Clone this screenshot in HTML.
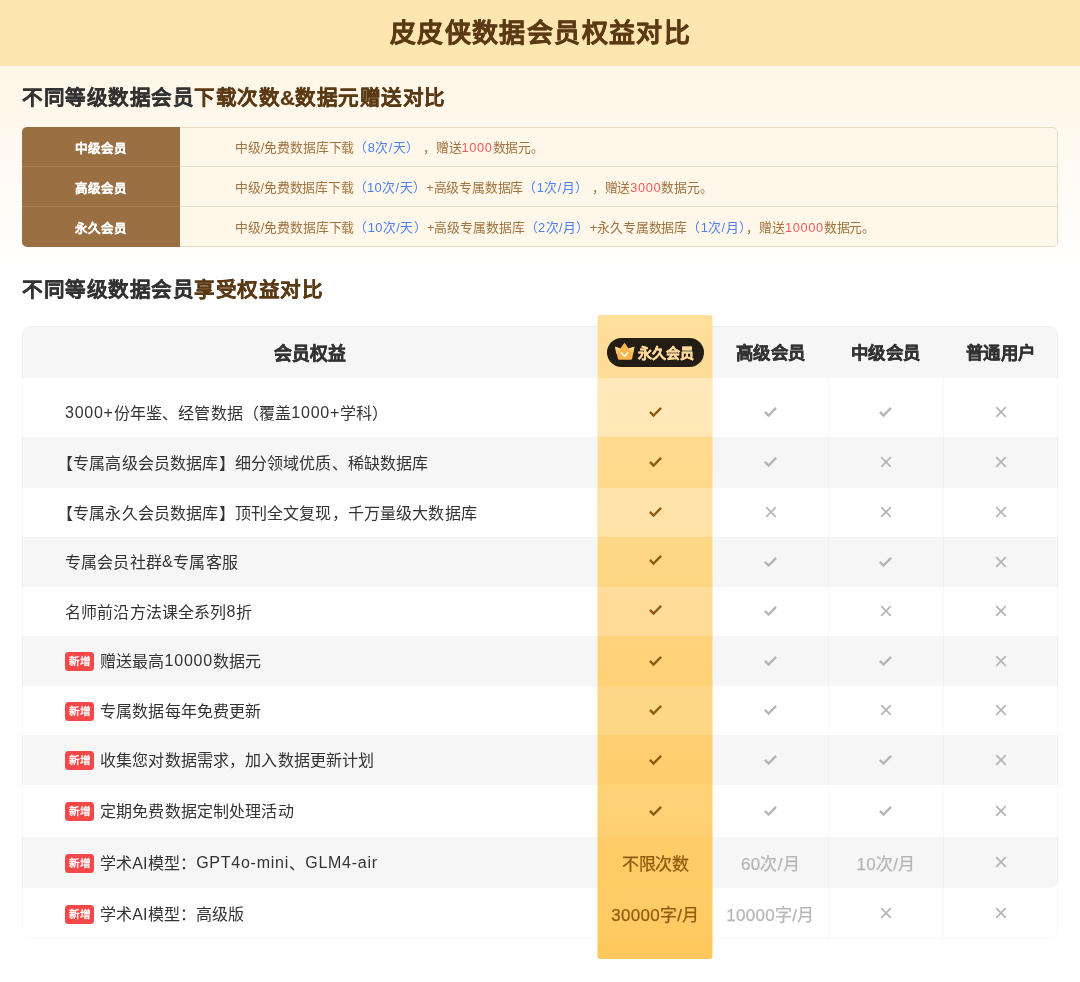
<!DOCTYPE html>
<html lang="zh-CN">
<head>
<meta charset="utf-8">
<title>皮皮侠数据会员权益对比</title>
<style>
*{box-sizing:border-box;margin:0;padding:0}
html,body{width:1080px;height:982px;overflow:hidden;background:#fff}
body{font-family:"Liberation Sans",sans-serif;color:#333;position:relative;will-change:transform;
  background:linear-gradient(180deg,#fff6e6 0px,#fff6e6 66px,#ffffff 272px,#ffffff 100%)}
.banner{height:66px;background:#fee6b1;text-align:center;line-height:65px;font-size:26px;font-weight:700;color:#5b3a16;letter-spacing:1.4px;padding-left:1px;padding-top:1px;-webkit-text-stroke:.35px #5b3a16}
h2{position:absolute;left:22px;font-size:20.6px;letter-spacing:.5px;-webkit-text-stroke:.25px currentColor;font-weight:700;line-height:28px;color:#333;white-space:nowrap}
h2 b{color:#5b3a16;font-weight:700}
.h2a{top:84px}
.h2b{top:276px}
/* table 1 */
.t1{position:absolute;left:22px;top:127px;width:1036px;height:120px;border-radius:5px;overflow:hidden;background:#fff7ea}
.t1:after{content:"";position:absolute;left:158px;top:0;right:0;bottom:0;border:1px solid #eadbc6;border-left:none;border-radius:0 5px 5px 0}
.t1 .r{display:flex;height:40px}
.t1 .k{width:158px;background:#9a7043;color:#fff;font-size:12.5px;font-weight:700;-webkit-text-stroke:.2px #fff;text-align:center;line-height:40px;padding-top:2px;box-shadow:inset 0 -1px 0 #a98155}
.t1 .r:last-child .k{box-shadow:none}
.t1 .v{flex:1;padding-left:55px;font-size:12.85px;color:#a3733f;line-height:41px;white-space:nowrap;letter-spacing:-.12px;box-shadow:inset 0 -1px 0 #eadbc6}
.t1 .v i{font-style:normal;color:#4d7ff0;letter-spacing:.4px}
.t1 .v em{font-style:normal;color:#f25a5a;letter-spacing:.6px}
.t1 .r:nth-child(2) .v{letter-spacing:-.19px}
/* table 2 */
.t2{position:absolute;left:22px;top:326px;width:1036px;height:613px;border-radius:9px;overflow:hidden;background:#fff}
.t2:after{content:"";position:absolute;left:0;top:0;right:0;bottom:0;border:1px solid rgba(0,0,0,.028);border-radius:9px}
.t2 .r{display:flex;align-items:center;position:relative}
.t2 .r:nth-child(1){height:52px}
.t2 .r:nth-child(2){height:59px}
.t2 .r:nth-child(3){height:51px}
.t2 .r:nth-child(4){height:49px}
.t2 .r:nth-child(5){height:50px}
.t2 .r:nth-child(6){height:49px}
.t2 .r:nth-child(7){height:50px}
.t2 .r:nth-child(8){height:49px}
.t2 .r:nth-child(9){height:50px}
.t2 .r:nth-child(10){height:52px}
.t2 .r:nth-child(11){height:51px}
.t2 .r:nth-child(12){height:51px}
.t2 .r.hd{background:#f6f6f6;font-weight:700}
.t2 .r.g{background:#f6f6f6}
.t2 .r:nth-child(11){border-bottom-right-radius:9px}
.t2 .c0{width:576px;height:100%;padding-left:43px;font-size:16px;letter-spacing:.15px;color:#333;white-space:nowrap;display:flex;align-items:center;padding-bottom:2px}
.t2 .c0 u{text-decoration:none;letter-spacing:.75px;position:relative;top:1px}
.t2 .hd .c0{padding:0;justify-content:center;font-size:17.8px;letter-spacing:0;font-weight:700;-webkit-text-stroke:.5px #333;padding-bottom:1px}
.t2 .c{width:115px;height:100%;text-align:center;color:#b5b5b5;display:flex;align-items:center;justify-content:center}
.t2 .c:nth-child(4),.t2 .c:nth-child(5){border-left:1px solid rgba(0,0,0,.024)}
.t2 .hd .c{color:#333;font-size:17.4px;letter-spacing:.5px;padding-left:.5px;font-weight:700;-webkit-text-stroke:.45px #333;padding-bottom:2px;border-left:none!important}
.t2 .r.first .c{padding-top:10px}
.t2 .r.first .c0{padding-top:10px}
.t2 .c.p{position:relative;z-index:3;color:#8f5a10}
.t2 .c.t{font-size:17px;color:#b6b6b6;letter-spacing:.3px;-webkit-text-stroke:.25px currentColor;padding-bottom:1px}
.t2 .c.p.t{color:#8f5a10}
.t2 .r:nth-child(11) .c.p.t{letter-spacing:-.3px}
svg.ck{width:16px;height:14px;display:block;margin-top:-1px}
.t2 .r:nth-child(5) .c.p svg,.t2 .r:nth-child(6) .c.p svg{margin-top:-4px}
svg.xx{width:12px;height:12px;display:block;margin-top:-1px}
.bk{margin-left:-8px}
.new{display:inline-block;width:29px;height:19px;border-radius:3.5px;background:#f54848;color:#fff;font-size:10.7px;font-weight:700;line-height:19px;text-align:center;margin-right:6px;letter-spacing:0;position:relative;top:1.5px}
/* highlighted column */
.hl{position:absolute;z-index:2;left:598px;transform:translateX(-.5px);top:315px;width:115px;height:644px;border-radius:3px;background:linear-gradient(180deg,#ffdf9c 0%,#ffc85c 100%)}
.hl i{position:absolute;left:0;width:115px;background:#fff;display:block}
.badge{position:absolute;z-index:4;left:607px;top:337.5px;width:97px;height:29px;border-radius:15px;background:#241d16;color:#fedb9a;font-size:14px;font-weight:700;-webkit-text-stroke:.4px #fedb9a;line-height:30px;padding-left:31px;white-space:nowrap}
.badge svg{position:absolute;left:-1px;top:-1.5px;width:40px;height:32px}
</style>
</head>
<body>
<div class="banner">皮皮侠数据会员权益对比</div>
<h2 class="h2a">不同等级数据会员<b>下载次数&amp;数据元赠送对比</b></h2>
<div class="t1">
  <div class="r"><div class="k">中级会员</div><div class="v">中级/免费数据库下载<i>（8次/天）</i> ，赠送<em>1000</em>数据元。</div></div>
  <div class="r"><div class="k">高级会员</div><div class="v">中级/免费数据库下载<i>（10次/天）</i>+高级专属数据库<i>（1次/月）</i> ，赠送<em>3000</em>数据元。</div></div>
  <div class="r"><div class="k">永久会员</div><div class="v">中级/免费数据库下载<i>（10次/天）</i>+高级专属数据库<i>（2次/月）</i>+永久专属数据库<i>（1次/月）</i>，赠送<em>10000</em>数据元。</div></div>
</div>
<h2 class="h2b">不同等级数据会员<b>享受权益对比</b></h2>
<div class="hl"><i style="top:63px;height:59px;opacity:0.34"></i><i style="top:173px;height:49px;opacity:0.27"></i><i style="top:272px;height:49px;opacity:0.2"></i><i style="top:371px;height:49px;opacity:0.13"></i><i style="top:470px;height:52px;opacity:0.07"></i><i style="top:573px;height:51px;opacity:0.02"></i></div>
<div class="badge"><svg viewBox="0 0 40 32"><defs><linearGradient id="wg" gradientUnits="userSpaceOnUse" x1="0" y1="10.5" x2="0" y2="17.5"><stop offset="0" stop-color="#ffe99c"/><stop offset="1" stop-color="#fbb64e"/></linearGradient></defs><path d="M9 10.7 L14.4 12.6 L18.5 6.7 L22.6 12.6 L28.4 10.7 L26.2 22.4 Q25.9 23.8 24.6 23.8 L13.5 23.8 Q12.2 23.8 11.9 22.4 Z" fill="#fbb64e"/><path d="M9 10.7 L14.4 12.6 L13 18 L10.4 18 Z M28.4 10.7 L22.6 12.6 L24.4 18 L27 18 Z" fill="url(#wg)"/><path d="M15.3 16.8 L18.5 20.3 L21.7 16.8" fill="none" stroke="#fff" stroke-width="1.5" stroke-linecap="round" stroke-linejoin="round"/></svg>永久会员</div>
<div class="t2">
  <div class="r hd"><div class="c0">会员权益</div><div class="c"></div><div class="c">高级会员</div><div class="c">中级会员</div><div class="c">普通用户</div></div>
  <div class="r first"><div class="c0"><u>3000+</u>份年鉴、经管数据（覆盖<u>1000+</u>学科）</div><div class="c p"><svg class="ck" viewBox="0 0 16 14"><path d="M1.9 6.9 L5.5 10.5 L13.1 2.9" fill="none" stroke="currentColor" stroke-width="2.4"/></svg></div><div class="c"><svg class="ck" viewBox="0 0 16 14"><path d="M1.9 6.9 L5.5 10.5 L13.1 2.9" fill="none" stroke="currentColor" stroke-width="2.4"/></svg></div><div class="c"><svg class="ck" viewBox="0 0 16 14"><path d="M1.9 6.9 L5.5 10.5 L13.1 2.9" fill="none" stroke="currentColor" stroke-width="2.4"/></svg></div><div class="c"><svg class="xx" viewBox="0 0 12 12"><path d="M1.2 1.2 L10.8 10.8 M10.8 1.2 L1.2 10.8" fill="none" stroke="currentColor" stroke-width="1.7"/></svg></div></div>
  <div class="r g"><div class="c0"><span class="bk">【</span>专属高级会员数据库】细分领域优质、稀缺数据库</div><div class="c p"><svg class="ck" viewBox="0 0 16 14"><path d="M1.9 6.9 L5.5 10.5 L13.1 2.9" fill="none" stroke="currentColor" stroke-width="2.4"/></svg></div><div class="c"><svg class="ck" viewBox="0 0 16 14"><path d="M1.9 6.9 L5.5 10.5 L13.1 2.9" fill="none" stroke="currentColor" stroke-width="2.4"/></svg></div><div class="c"><svg class="xx" viewBox="0 0 12 12"><path d="M1.2 1.2 L10.8 10.8 M10.8 1.2 L1.2 10.8" fill="none" stroke="currentColor" stroke-width="1.7"/></svg></div><div class="c"><svg class="xx" viewBox="0 0 12 12"><path d="M1.2 1.2 L10.8 10.8 M10.8 1.2 L1.2 10.8" fill="none" stroke="currentColor" stroke-width="1.7"/></svg></div></div>
  <div class="r"><div class="c0"><span class="bk">【</span>专属永久会员数据库】顶刊全文复现，千万量级大数据库</div><div class="c p"><svg class="ck" viewBox="0 0 16 14"><path d="M1.9 6.9 L5.5 10.5 L13.1 2.9" fill="none" stroke="currentColor" stroke-width="2.4"/></svg></div><div class="c"><svg class="xx" viewBox="0 0 12 12"><path d="M1.2 1.2 L10.8 10.8 M10.8 1.2 L1.2 10.8" fill="none" stroke="currentColor" stroke-width="1.7"/></svg></div><div class="c"><svg class="xx" viewBox="0 0 12 12"><path d="M1.2 1.2 L10.8 10.8 M10.8 1.2 L1.2 10.8" fill="none" stroke="currentColor" stroke-width="1.7"/></svg></div><div class="c"><svg class="xx" viewBox="0 0 12 12"><path d="M1.2 1.2 L10.8 10.8 M10.8 1.2 L1.2 10.8" fill="none" stroke="currentColor" stroke-width="1.7"/></svg></div></div>
  <div class="r g"><div class="c0">专属会员社群<u>&amp;</u>专属客服</div><div class="c p"><svg class="ck" viewBox="0 0 16 14"><path d="M1.9 6.9 L5.5 10.5 L13.1 2.9" fill="none" stroke="currentColor" stroke-width="2.4"/></svg></div><div class="c"><svg class="ck" viewBox="0 0 16 14"><path d="M1.9 6.9 L5.5 10.5 L13.1 2.9" fill="none" stroke="currentColor" stroke-width="2.4"/></svg></div><div class="c"><svg class="ck" viewBox="0 0 16 14"><path d="M1.9 6.9 L5.5 10.5 L13.1 2.9" fill="none" stroke="currentColor" stroke-width="2.4"/></svg></div><div class="c"><svg class="xx" viewBox="0 0 12 12"><path d="M1.2 1.2 L10.8 10.8 M10.8 1.2 L1.2 10.8" fill="none" stroke="currentColor" stroke-width="1.7"/></svg></div></div>
  <div class="r"><div class="c0">名师前沿方法课全系列<u>8</u>折</div><div class="c p"><svg class="ck" viewBox="0 0 16 14"><path d="M1.9 6.9 L5.5 10.5 L13.1 2.9" fill="none" stroke="currentColor" stroke-width="2.4"/></svg></div><div class="c"><svg class="ck" viewBox="0 0 16 14"><path d="M1.9 6.9 L5.5 10.5 L13.1 2.9" fill="none" stroke="currentColor" stroke-width="2.4"/></svg></div><div class="c"><svg class="xx" viewBox="0 0 12 12"><path d="M1.2 1.2 L10.8 10.8 M10.8 1.2 L1.2 10.8" fill="none" stroke="currentColor" stroke-width="1.7"/></svg></div><div class="c"><svg class="xx" viewBox="0 0 12 12"><path d="M1.2 1.2 L10.8 10.8 M10.8 1.2 L1.2 10.8" fill="none" stroke="currentColor" stroke-width="1.7"/></svg></div></div>
  <div class="r g"><div class="c0"><span class="new">新增</span>赠送最高<u>10000</u>数据元</div><div class="c p"><svg class="ck" viewBox="0 0 16 14"><path d="M1.9 6.9 L5.5 10.5 L13.1 2.9" fill="none" stroke="currentColor" stroke-width="2.4"/></svg></div><div class="c"><svg class="ck" viewBox="0 0 16 14"><path d="M1.9 6.9 L5.5 10.5 L13.1 2.9" fill="none" stroke="currentColor" stroke-width="2.4"/></svg></div><div class="c"><svg class="ck" viewBox="0 0 16 14"><path d="M1.9 6.9 L5.5 10.5 L13.1 2.9" fill="none" stroke="currentColor" stroke-width="2.4"/></svg></div><div class="c"><svg class="xx" viewBox="0 0 12 12"><path d="M1.2 1.2 L10.8 10.8 M10.8 1.2 L1.2 10.8" fill="none" stroke="currentColor" stroke-width="1.7"/></svg></div></div>
  <div class="r"><div class="c0"><span class="new">新增</span>专属数据每年免费更新</div><div class="c p"><svg class="ck" viewBox="0 0 16 14"><path d="M1.9 6.9 L5.5 10.5 L13.1 2.9" fill="none" stroke="currentColor" stroke-width="2.4"/></svg></div><div class="c"><svg class="ck" viewBox="0 0 16 14"><path d="M1.9 6.9 L5.5 10.5 L13.1 2.9" fill="none" stroke="currentColor" stroke-width="2.4"/></svg></div><div class="c"><svg class="xx" viewBox="0 0 12 12"><path d="M1.2 1.2 L10.8 10.8 M10.8 1.2 L1.2 10.8" fill="none" stroke="currentColor" stroke-width="1.7"/></svg></div><div class="c"><svg class="xx" viewBox="0 0 12 12"><path d="M1.2 1.2 L10.8 10.8 M10.8 1.2 L1.2 10.8" fill="none" stroke="currentColor" stroke-width="1.7"/></svg></div></div>
  <div class="r g"><div class="c0"><span class="new">新增</span>收集您对数据需求，加入数据更新计划</div><div class="c p"><svg class="ck" viewBox="0 0 16 14"><path d="M1.9 6.9 L5.5 10.5 L13.1 2.9" fill="none" stroke="currentColor" stroke-width="2.4"/></svg></div><div class="c"><svg class="ck" viewBox="0 0 16 14"><path d="M1.9 6.9 L5.5 10.5 L13.1 2.9" fill="none" stroke="currentColor" stroke-width="2.4"/></svg></div><div class="c"><svg class="ck" viewBox="0 0 16 14"><path d="M1.9 6.9 L5.5 10.5 L13.1 2.9" fill="none" stroke="currentColor" stroke-width="2.4"/></svg></div><div class="c"><svg class="xx" viewBox="0 0 12 12"><path d="M1.2 1.2 L10.8 10.8 M10.8 1.2 L1.2 10.8" fill="none" stroke="currentColor" stroke-width="1.7"/></svg></div></div>
  <div class="r"><div class="c0"><span class="new">新增</span>定期免费数据定制处理活动</div><div class="c p"><svg class="ck" viewBox="0 0 16 14"><path d="M1.9 6.9 L5.5 10.5 L13.1 2.9" fill="none" stroke="currentColor" stroke-width="2.4"/></svg></div><div class="c"><svg class="ck" viewBox="0 0 16 14"><path d="M1.9 6.9 L5.5 10.5 L13.1 2.9" fill="none" stroke="currentColor" stroke-width="2.4"/></svg></div><div class="c"><svg class="ck" viewBox="0 0 16 14"><path d="M1.9 6.9 L5.5 10.5 L13.1 2.9" fill="none" stroke="currentColor" stroke-width="2.4"/></svg></div><div class="c"><svg class="xx" viewBox="0 0 12 12"><path d="M1.2 1.2 L10.8 10.8 M10.8 1.2 L1.2 10.8" fill="none" stroke="currentColor" stroke-width="1.7"/></svg></div></div>
  <div class="r g"><div class="c0"><span class="new">新增</span>学术AI模型：<u>GPT4o-mini</u>、<u>GLM4-air</u></div><div class="c p t">不限次数</div><div class="c t">60次/月</div><div class="c t">10次/月</div><div class="c"><svg class="xx" viewBox="0 0 12 12"><path d="M1.2 1.2 L10.8 10.8 M10.8 1.2 L1.2 10.8" fill="none" stroke="currentColor" stroke-width="1.7"/></svg></div></div>
  <div class="r last"><div class="c0"><span class="new">新增</span>学术AI模型：高级版</div><div class="c p t">30000字/月</div><div class="c t">10000字/月</div><div class="c"><svg class="xx" viewBox="0 0 12 12"><path d="M1.2 1.2 L10.8 10.8 M10.8 1.2 L1.2 10.8" fill="none" stroke="currentColor" stroke-width="1.7"/></svg></div><div class="c"><svg class="xx" viewBox="0 0 12 12"><path d="M1.2 1.2 L10.8 10.8 M10.8 1.2 L1.2 10.8" fill="none" stroke="currentColor" stroke-width="1.7"/></svg></div></div>
</div>
</body>
</html>
